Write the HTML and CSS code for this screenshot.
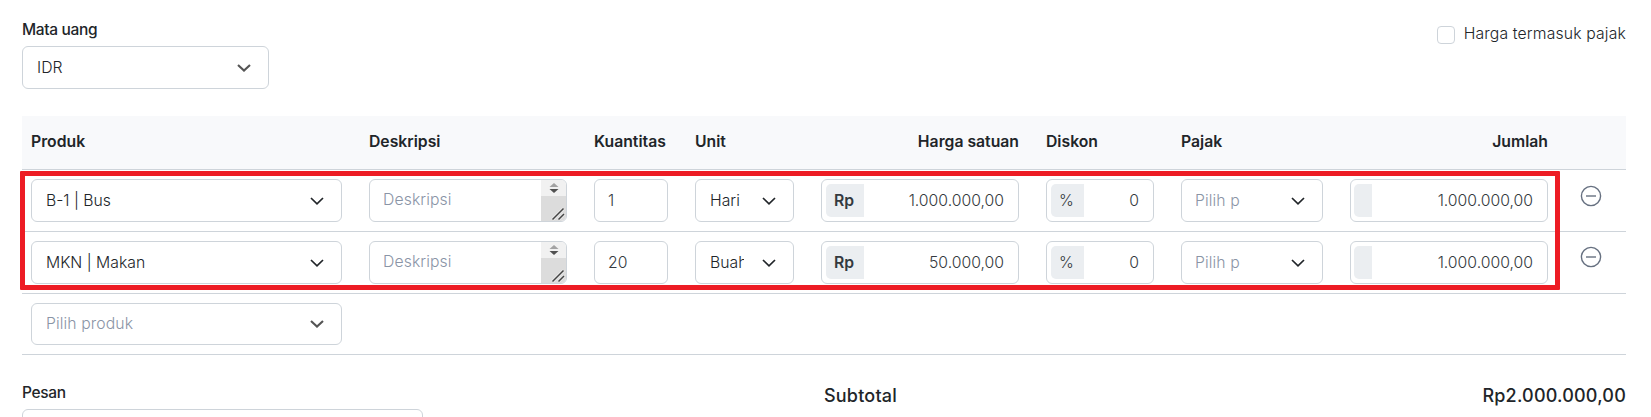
FILE: index.html
```html
<!DOCTYPE html>
<html lang="id">
<head>
    <meta charset="UTF-8">
    <meta name="viewport" content="width=device-width, initial-scale=1.0">
    <title>Tagihan</title>
    <link rel="stylesheet" href="styles.css">
</head>
<body>
    <svg class="sprite">
        <symbol id="chevron" viewBox="0 0 14 8">
            <path d="M1 1l6 5.8L13 1" fill="none" stroke="currentColor" stroke-width="1.7"/>
        </symbol>
        <symbol id="chevron-bold" viewBox="0 0 14 8">
            <path d="M1 1l6 5.600L13 1" fill="none" stroke="currentColor" stroke-width="2.1"/>
        </symbol>
        <symbol id="minus" viewBox="0 0 22 22">
            <circle cx="11" cy="11" r="9.6" fill="none" stroke="currentColor" stroke-width="1.4"/>
            <path d="M6 11h10" stroke="currentColor" stroke-width="1.4"/>
        </symbol>
        <symbol id="scroll" viewBox="0 0 25 41">
            <path d="M0 0h25v16H0z" fill="#f1f1f1"/>
            <path d="M0 16h25v25H0z" fill="#dcdcdc"/>
            <path d="M8.500 7l4.500-4 4.500 4z" fill="#a3a3a3"/>
            <path d="M8.500 9l4.500 4 4.500-4z" fill="#505050"/>
            <path d="M11.500 39.500L22.500 28.500M17.500 39.500l5.500-5.500" stroke="#eee" stroke-width="3"/>
            <path d="M11.500 39.500L22.500 28.500M17.500 39.500l5.500-5.500" stroke="#444" stroke-width="1.500"/>
        </symbol>
    </svg>

    <div class="top">
        <div class="currency">
            <div class="label">Mata uang</div>
            <div class="field"><span class="value">IDR</span><svg class="chevron soft"><use href="#chevron-bold"/></svg></div>
        </div>
        <label class="tax"><span class="checkbox"></span>Harga termasuk pajak</label>
    </div>

    <div class="items">
        <table>
            <colgroup>
                <col class="c-product"><col class="c-desc"><col class="c-qty"><col class="c-unit"><col class="c-price"><col class="c-disc"><col class="c-tax"><col class="c-total"><col class="c-action">
            </colgroup>
            <thead>
                <tr>
                    <th>Produk</th>
                    <th>Deskripsi</th>
                    <th>Kuantitas</th>
                    <th>Unit</th>
                    <th class="right">Harga satuan</th>
                    <th>Diskon</th>
                    <th>Pajak</th>
                    <th class="right">Jumlah</th>
                    <th></th>
                </tr>
            </thead>
            <tbody>
                <tr>
                    <td><div class="field"><span class="value">B-1 | Bus</span><svg class="chevron"><use href="#chevron"/></svg></div></td>
                    <td><div class="field area"><span class="value placeholder">Deskripsi</span><svg class="scroll"><use href="#scroll"/></svg></div></td>
                    <td><div class="field number"><span class="value">1</span></div></td>
                    <td><div class="field unit"><span class="value">Hari</span><svg class="chevron"><use href="#chevron"/></svg></div></td>
                    <td><div class="field number"><span class="prefix bold">Rp</span><span class="value right">1.000.000,00</span></div></td>
                    <td><div class="field number"><span class="prefix">%</span><span class="value right">0</span></div></td>
                    <td><div class="field pajak"><span class="value placeholder">Pilih pajak</span><svg class="chevron"><use href="#chevron"/></svg></div></td>
                    <td><div class="field number"><span class="prefix empty"></span><span class="value right">1.000.000,00</span></div></td>
                    <td class="action"><svg class="minus"><use href="#minus"/></svg></td>
                </tr>
                <tr>
                    <td><div class="field"><span class="value">MKN | Makan</span><svg class="chevron"><use href="#chevron"/></svg></div></td>
                    <td><div class="field area"><span class="value placeholder">Deskripsi</span><svg class="scroll"><use href="#scroll"/></svg></div></td>
                    <td><div class="field number"><span class="value">20</span></div></td>
                    <td><div class="field unit"><span class="value">Buah</span><svg class="chevron"><use href="#chevron"/></svg></div></td>
                    <td><div class="field number"><span class="prefix bold">Rp</span><span class="value right">50.000,00</span></div></td>
                    <td><div class="field number"><span class="prefix">%</span><span class="value right">0</span></div></td>
                    <td><div class="field pajak"><span class="value placeholder">Pilih pajak</span><svg class="chevron"><use href="#chevron"/></svg></div></td>
                    <td><div class="field number"><span class="prefix empty"></span><span class="value right">1.000.000,00</span></div></td>
                    <td class="action last"><svg class="minus"><use href="#minus"/></svg></td>
                </tr>
                <tr class="new">
                    <td><div class="field"><span class="value placeholder">Pilih produk</span><svg class="chevron soft"><use href="#chevron-bold"/></svg></div></td>
                    <td colspan="8"></td>
                </tr>
            </tbody>
        </table>
        <div class="highlight"></div>
    </div>

    <div class="bottom">
        <div class="message">
            <div class="label">Pesan</div>
            <div class="textarea"></div>
        </div>
        <div class="subtotal"><span>Subtotal</span><span>Rp2.000.000,00</span></div>
    </div>
</body>
</html>
```
FILE: styles.css
```css
* {
    box-sizing: border-box;
}
body {
    margin: 0;
    padding: 0 25px 0 22px;
    height: 417px;
    overflow: hidden;
    background: #fff;
    color: #212529;
    font-family: Inter, "Liberation Sans", sans-serif;
    font-size: 15.75px;
    line-height: 24px;
}
.sprite {
    display: none;
}
.top {
    display: flex;
    justify-content: space-between;
    align-items: flex-start;
    height: 116px;
    padding-top: 17px;
}
.currency {
    width: 247px;
}
.label {
    height: 29px;
    padding-top: 1px;
    font-weight: 500;
    font-size: 15.5px;
    letter-spacing: -0.35px;
}
.tax {
    display: flex;
    gap: 9px;
    padding-top: 5px;
    font-weight: 300;
    letter-spacing: 0.15px;
}
.checkbox {
    width: 18px;
    height: 18px;
    margin-top: 4px;
    border: 1px solid #ced4da;
    border-radius: 4px;
}
.field {
    display: flex;
    align-items: center;
    height: 43px;
    padding: 0 17px 0 14px;
    border: 1px solid #ced4da;
    border-radius: 6px;
    background: #fff;
    font-weight: 300;
    overflow: hidden;
}
.value {
    flex: 1;
    min-width: 0;
    overflow: hidden;
    white-space: nowrap;
}
.placeholder {
    color: #8a94a6;
    letter-spacing: 0.1px;
}
.right {
    text-align: right;
}
.chevron {
    flex: none;
    width: 14px;
    height: 8px;
    color: #212529;
}
.soft {
    color: #555;
}
.items {
    position: relative;
}
table {
    width: 1604px;
    table-layout: fixed;
    border-collapse: separate;
    border-spacing: 0;
}
.c-product { width: 338px; }
.c-desc { width: 225px; }
.c-qty { width: 101px; }
.c-unit { width: 126px; }
.c-price { width: 225px; }
.c-disc { width: 135px; }
.c-tax { width: 169px; }
.c-total { width: 225px; }
.c-action { width: 60px; }
th {
    height: 54px;
    padding: 0 18px 1px 9px;
    background: #f8f9fb;
    border-bottom: 1px solid #ced4da;
    font-weight: 600;
    text-align: left;
    white-space: nowrap;
}
th:nth-child(3) {
    padding-right: 0;
}
th.right {
    text-align: right;
}
td {
    height: 62px;
    padding: 9px 18px 9px 9px;
    border-bottom: 1px solid #ced4da;
    vertical-align: top;
}
.new td {
    height: 61px;
}
.new .field {
    height: 42px;
}
.area {
    padding: 0 0 2px 13px;
}
.scroll {
    flex: none;
    width: 25px;
    height: 41px;
    margin-bottom: -2px;
}
.number {
    padding: 0 14px 0 4px;
    color: #343a40;
}
.number .value:first-child {
    padding-left: 9px;
}
.unit .value,
.pajak .value {
    flex: none;
    width: 34px;
    margin-right: auto;
}
.pajak {
    padding-left: 13px;
}
.pajak .value {
    width: 45px;
}
.prefix {
    height: 33px;
    padding: 0 10px 0 8px;
    border-radius: 5px 0 0 5px;
    background: #ebeef1;
    line-height: 33px;
}
.bold {
    font-weight: 600;
}
.empty {
    width: 18px;
    margin-left: -1px;
}
.action {
    padding: 15px 0 0 14px;
}
.last {
    padding-top: 14px;
}
.minus {
    display: block;
    width: 22px;
    height: 22px;
    color: #667080;
}
/* red frame around the filled rows */
.highlight {
    position: absolute;
    top: 55px;
    left: -2px;
    width: 1540px;
    height: 119px;
    border: 5px solid #ed1c24;
    border-radius: 1px;
}
.bottom {
    display: flex;
    height: 62px;
    padding-top: 25px;
    overflow: hidden;
}
.message {
    width: 401px;
}
.textarea {
    height: 40px;
    border: 1px solid #ced4da;
    border-radius: 6px;
}
.subtotal {
    display: flex;
    flex: 1;
    justify-content: space-between;
    padding-top: 4px;
    margin-left: 401px;
    font-size: 18px;
    font-weight: 500;
    letter-spacing: 0.2px;
}
```
